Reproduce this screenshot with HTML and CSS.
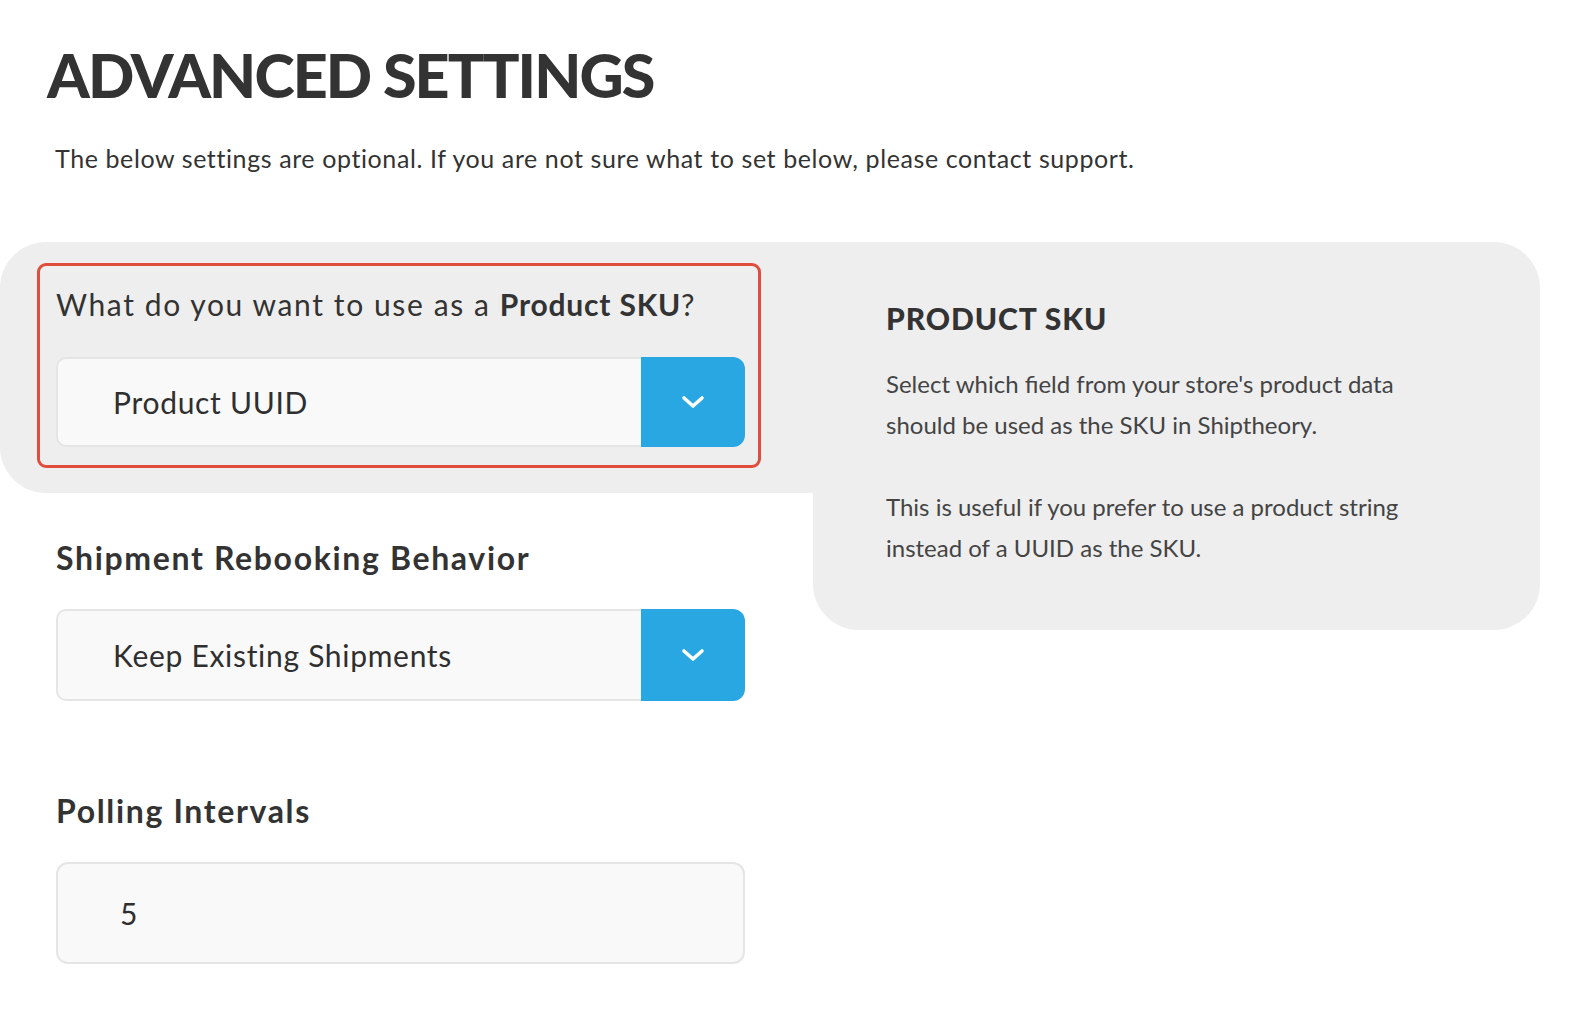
FILE: index.html
```html
<!DOCTYPE html>
<html lang="en">
<head>
<meta charset="utf-8">
<title>Advanced Settings</title>
<link rel="stylesheet" href="styles.css">
</head>
<body>
<main class="page">
  <header class="intro">
    <h1 class="title">ADVANCED SETTINGS</h1>
    <p class="lead">The below settings are optional. If you are not sure what to set below, please contact support.</p>
  </header>

  <section class="settings">
    <div class="fields">
      <div class="setting setting-active">
        <div class="focus-box">
          <label class="question">What do you want to use as a <strong>Product SKU</strong>?</label>
          <div class="select select-first">
            <span class="select-value">Product UUID</span>
            <span class="select-btn">
              <svg width="26" height="16" viewBox="0 0 26 16"><path d="M4 4 L13 12 L22 4" fill="none" stroke="#fff" stroke-width="3.6" stroke-linecap="round" stroke-linejoin="round"/></svg>
            </span>
          </div>
        </div>
      </div>

      <div class="setting">
        <label class="field-label">Shipment Rebooking Behavior</label>
        <div class="select">
          <span class="select-value">Keep Existing Shipments</span>
          <span class="select-btn">
            <svg width="26" height="16" viewBox="0 0 26 16"><path d="M4 4 L13 12 L22 4" fill="none" stroke="#fff" stroke-width="3.6" stroke-linecap="round" stroke-linejoin="round"/></svg>
          </span>
        </div>
      </div>

      <div class="setting setting-last">
        <label class="field-label">Polling Intervals</label>
        <div class="input"><span class="select-value">5</span></div>
      </div>
    </div>

    <aside class="help">
      <h2 class="help-title">PRODUCT SKU</h2>
      <p class="help-text">Select which field from your store's product data should be used as the SKU in Shiptheory.</p>
      <p class="help-text">This is useful if you prefer to use a product string instead of a UUID as the SKU.</p>
    </aside>
  </section>
</main>
</body>
</html>
```

FILE: styles.css
```css
* { box-sizing: border-box; }

html, body {
  margin: 0;
  padding: 0;
  background: #ffffff;
}

body {
  font-family: "Lato", "Liberation Sans", sans-serif;
  color: #333333;
}

.page {
  width: 1593px;
}

.intro {
  padding: 42px 0 0 47px;
}

.title {
  margin: 0;
  font-family: "Lato", sans-serif;
  font-weight: 900;
  font-size: 61px;
  line-height: 66px;
  letter-spacing: -1.9px;
  color: #333333;
}

.lead {
  margin: 34px 0 0 8px;
  font-size: 25px;
  line-height: 32px;
  letter-spacing: 0.6px;
  color: #333333;
}

.settings {
  display: grid;
  grid-template-columns: 813px 727px;
  align-items: start;
  margin-top: 68px;
}

.fields {
  display: flex;
  flex-direction: column;
}

.setting {
  padding: 0 0 0 56px;
}

.setting-active {
  background: #eeeeee;
  border-radius: 46px 0 0 46px;
  padding: 21px 0 0 37px;
  height: 251px;
}

.focus-box {
  width: 724px;
  height: 205px;
  border: 3px solid #e24c3c;
  border-radius: 9px;
  padding: 19px 0 0 16px;
}

.question {
  display: block;
  font-size: 30px;
  line-height: 38px;
  letter-spacing: 1.6px;
  color: #333333;
}

.question strong {
  font-weight: 700;
  letter-spacing: 0.8px;
}

.select {
  display: flex;
  width: 689px;
  height: 92px;
  margin-top: 31px;
}

.select-value {
  flex: 1;
  display: flex;
  align-items: center;
  padding-left: 55px;
  font-size: 30px;
  letter-spacing: 0.7px;
  color: #2f2f2f;
  background: #f9f9f9;
  border: 2px solid #e5e5e5;
  border-right: none;
  border-radius: 10px 0 0 10px;
}

.select-btn {
  width: 104px;
  display: flex;
  align-items: center;
  justify-content: center;
  background: #29a7e3;
  border-radius: 0 12px 12px 0;
}

.focus-box .select.select-first {
  margin-top: 34px;
  height: 90px;
}

.setting .field-label {
  display: block;
  margin-top: 45px;
  font-size: 32px;
  line-height: 40px;
  font-weight: 700;
  letter-spacing: 1.65px;
  color: #333333;
}

.setting-last .field-label {
  margin-top: 90px;
}

.input {
  display: flex;
  width: 689px;
  height: 102px;
  margin-top: 31px;
}

.input .select-value {
  padding-left: 62px;
  border: 2px solid #e5e5e5;
  border-radius: 12px;
}

.help {
  background: #eeeeee;
  border-radius: 0 46px 46px 46px;
  height: 388px;
  padding: 58px 40px 0 73px;
}

.help-title {
  margin: 0;
  font-size: 30px;
  line-height: 36px;
  font-weight: 900;
  letter-spacing: 0.9px;
  color: #333333;
}

.help-text {
  margin: 27px 0 0 0;
  font-size: 24px;
  line-height: 41px;
  letter-spacing: 0px;
  color: #444444;
  max-width: 548px;
}

.help-text + .help-text {
  margin-top: 41px;
}
```
